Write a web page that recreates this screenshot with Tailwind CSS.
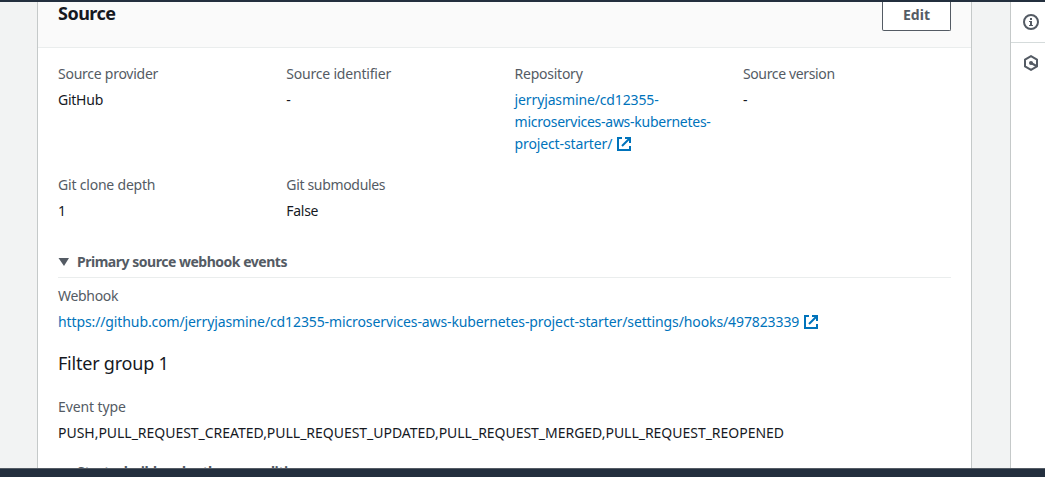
<!DOCTYPE html>
<html lang="en"><head><meta charset="utf-8"><title>Source</title>
<script src="https://cdn.jsdelivr.net/npm/@tailwindcss/browser@4"></script></head>
<body class="h-[477px] overflow-hidden bg-[#f2f3f3] font-['Noto_Sans',sans-serif] text-[14px] leading-[22px] text-[#16191f]">
<div class="flex h-[477px] flex-col">
  <div class="h-0.5 shrink-0 bg-[#232f3e]"></div>
  <div class="flex h-[466px] shrink-0 justify-between overflow-hidden">
    <main class="ml-[37px] h-[500px] w-[935px] shrink-0 border-x border-[#c5c9c9] bg-white">
      <header class="flex h-[46px] items-start justify-between border-b border-[#eaeded] bg-[#fafafa] px-5">
        <h2 class="text-[18px] font-bold tracking-[-0.5px]">Source</h2>
        <button class="h-[29px] w-[69px] rounded-b-[2px] border border-t-0 border-[#545b64] bg-white pb-[2px] font-bold text-[#545b64]">Edit</button>
      </header>
      <div class="whitespace-nowrap px-5 pt-[15px]">
        <dl class="grid grid-cols-[228.3px_228.3px_228.3px_1fr] gap-y-[19px]">
          <div><dt class="tracking-[-0.25px] text-[#545b64]">Source provider</dt><dd class="mt-1 tracking-[-0.25px]">GitHub</dd></div>
          <div><dt class="tracking-[-0.2px] text-[#545b64]">Source identifier</dt><dd class="mt-1">-</dd></div>
          <div><dt class="tracking-[-0.25px] text-[#545b64]">Repository</dt><dd class="mt-1 text-[#0073bb]"><a class="tracking-[-0.13px]">jerryjasmine/cd12355-</a><br><a class="tracking-[-0.26px]">microservices-aws-kubernetes-</a><br><a class="inline-flex items-center gap-1 tracking-[-0.13px]">project-starter/
            <svg class="size-4" viewBox="0 0 16 16" fill="none" stroke="currentColor" stroke-width="2"><path d="M6 2H2v12h12v-4"/><path d="M9 2h5v5M14 2 6 10"/></svg></a></dd></div>
          <div><dt class="tracking-[-0.35px] text-[#545b64]">Source version</dt><dd class="mt-1">-</dd></div>
          <div><dt class="tracking-[-0.2px] text-[#545b64]">Git clone depth</dt><dd class="mt-1">1</dd></div>
          <div><dt class="tracking-[-0.33px] text-[#545b64]">Git submodules</dt><dd class="mt-1 tracking-[-0.3px]">False</dd></div>
        </dl>
        <h3 class="mt-[29px] flex h-[27px] items-start border-b border-[#eaeded] font-bold tracking-[-0.48px] text-[#545b64]">
          <svg class="mt-[7px] mr-2 h-2 w-[11px]" viewBox="0 0 11 8" fill="currentColor"><path d="M0.5 0h10.5L6 8z"/></svg>Primary source webhook events</h3>
        <p class="mt-[7px] tracking-[-0.3px] text-[#545b64]">Webhook</p>
        <a class="mt-1 flex items-center gap-1 tracking-[-0.11px] text-[#0073bb]">https://github.com/jerryjasmine/cd12355-microservices-aws-kubernetes-project-starter/settings/hooks/497823339
          <svg class="size-4" viewBox="0 0 16 16" fill="none" stroke="currentColor" stroke-width="2"><path d="M6 2H2v12h12v-4"/><path d="M9 2h5v5M14 2 6 10"/></svg></a>
        <h3 class="mt-[19px] text-[18px] tracking-[-0.22px]">Filter group 1</h3>
        <p class="mt-[22px] tracking-[-0.1px] text-[#545b64]">Event type</p>
        <p class="mt-1 tracking-[-0.025px]">PUSH,PULL_REQUEST_CREATED,PULL_REQUEST_UPDATED,PULL_REQUEST_MERGED,PULL_REQUEST_REOPENED</p>
        <h3 class="mt-[17px] pl-[19px] font-bold tracking-[-0.44px] text-[#545b64]">Start a build under these conditions</h3>
      </div>
    </main>
    <aside class="w-[35px] border-l border-[#c5c9c9] bg-white text-[#545b64]">
      <div class="flex h-[41px] items-center border-b border-[#d5dbdb] pl-3">
        <svg class="size-4" viewBox="0 0 16 16" fill="none" stroke="currentColor"><circle cx="8" cy="8" r="7" stroke-width="2"/><path d="M7 4h2v2H7zM6 7h3v4h1v1H6v-1h1V8H6z" fill="currentColor" stroke="none"/></svg>
      </div>
      <div class="flex h-10 items-center pl-3">
        <svg class="size-4" viewBox="0 0 16 16" fill="none" stroke="currentColor" stroke-width="2" stroke-linejoin="round"><path d="M8 1.1 14 4.6v6.8L8 14.9 2 11.4V4.6z"/><circle cx="8" cy="8" r="2" fill="currentColor" stroke="none"/><path d="m8 8 5.5 3"/></svg>
      </div>
    </aside>
  </div>
  <div class="h-[9px] shrink-0 border-t border-[#545b64] bg-[#232f3e]"></div>
</div>
</body></html>
